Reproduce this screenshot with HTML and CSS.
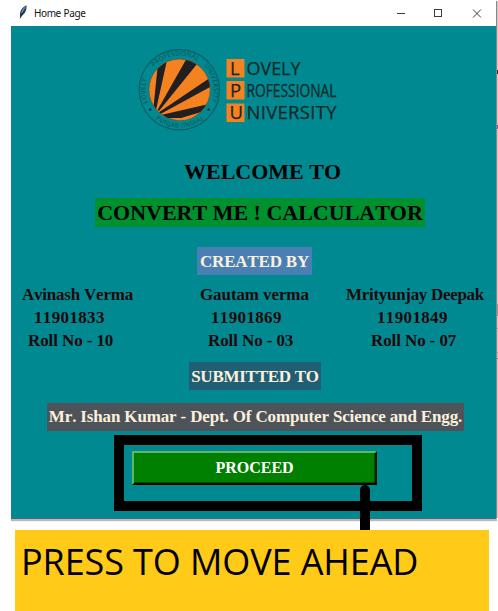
FILE: index.html
```html
<!DOCTYPE html>
<html lang="en">
<head>
<meta charset="utf-8">
<title>Home Page</title>
<link rel="stylesheet" href="styles.css">
</head>
<body>
<div class="desktop">
  <main class="window">
    <header class="titlebar">
      <svg class="feather" width="10" height="14" viewBox="0 0 10 14"><path d="M1.2 13 1 10.5C.8 6 3 2.500 7.300.300c.8 2 .1 5-1.600 7.700L3 10.800z" fill="#243752"/><path d="M2.300 9C2.400 5.400 4.200 2.800 6.700 1.400 6.900 4 5.200 6.800 2.300 9z" fill="#6c9ed4"/><path d="M1 13.400 6 3.500" stroke="#182438" stroke-width=".8"/></svg>
      <span class="title">Home Page</span>
      <svg class="controls" width="86" height="12" viewBox="0 0 86 12" fill="none" stroke="#3c3c3c"><path d="M0 6.500h8"/><rect x="37.500" y="2.500" width="7" height="7"/><path d="m76 2.500 8 8m0-8-8 8"/></svg>
    </header>
    <section class="content">
      <svg class="logo" width="210" height="90" viewBox="134 45 210 90">
        <defs>
          <clipPath id="disc"><circle cx="179.600" cy="89.700" r="30.500"/></clipPath>
          <path id="arcTop" d="M148.200 103.500A34.200 34.200 0 1 1 210.800 103.500"/>
          <path id="arcBottom" d="M146 107.500A38 38 0 0 0 213 107.500"/>
        </defs>
        <circle cx="179.300" cy="89.700" r="40.100" fill="none" stroke="#125d64" stroke-width="1.200"/>
        <circle cx="179.600" cy="89.700" r="30.700" fill="#f58220" stroke="#5c5548" stroke-width=".8"/>
        <g clip-path="url(#disc)" fill="#231f20">
          <path d="M153.500 107 158.500 58H167.500L156 110zM157.500 110 187.500 57 197 64 159 111zM158.500 112.500 209 78.500 212 86 160.500 114zM161 115 211 103.500V113L185 118 162 118z"/>
          <path d="M171 121 208 110v4l-28 8z" fill="#f58220"/>
        </g>
        <g class="seal-text">
          <text><textPath href="#arcTop" startOffset="1" textLength="24">LOVELY</textPath></text>
          <text><textPath href="#arcTop" startOffset="39" textLength="48">PROFESSIONAL</textPath></text>
          <text><textPath href="#arcTop" startOffset="95" textLength="38">UNIVERSITY</textPath></text>
          <text><textPath href="#arcBottom" startOffset="15" textLength="51">PUNJAB (INDIA)</textPath></text>
        </g>
        <circle cx="150.200" cy="109.500" r="1.300" fill="#122c30"/><circle cx="208.700" cy="109.500" r="1.300" fill="#122c30"/>
        <path d="M226.500 59h18v18.500h-18zM226.500 81h18v18.500h-18zM226.500 103.500h18v18.500h-18z" fill="#f58220"/>
        <g class="logo-text">
          <text x="230" y="75.200">L</text><text x="230" y="97.200">P</text><text x="229.500" y="119.200">U</text>
          <text x="246.500" y="75.200" textLength="54" lengthAdjust="spacingAndGlyphs">OVELY</text>
          <text x="246.500" y="97.200" textLength="90" lengthAdjust="spacingAndGlyphs">ROFESSIONAL</text>
          <text x="246.500" y="119.200" textLength="90">NIVERSITY</text>
        </g>
      </svg>
      <h1 class="welcome">WELCOME TO</h1>
      <h2 class="label product">CONVERT ME ! CALCULATOR</h2>
      <h3 class="label created">CREATED BY</h3>
      <div class="people">
        <div class="person first"><p class="name">Avinash Verma</p><p class="num">11901833</p><p class="roll">Roll No - 10</p></div>
        <div class="person second"><p class="name">Gautam verma</p><p class="num">11901869</p><p class="roll">Roll No - 03</p></div>
        <div class="person third"><p class="name">Mrityunjay Deepak</p><p class="num">11901849</p><p class="roll">Roll No - 07</p></div>
      </div>
      <h3 class="label submitted">SUBMITTED TO</h3>
      <p class="label teacher">Mr. Ishan Kumar - Dept. Of Computer Science and Engg.</p>
      <div class="highlight"><button class="proceed">PROCEED</button></div>
    </section>
  </main>
  <aside class="edge"><i class="mark dot"></i><i class="mark purple"></i><i class="mark gray"></i><i class="mark rule-a"></i><i class="mark rule-b"></i><i class="mark rule-c"></i></aside>
  <div class="pointer"></div>
  <div class="callout">PRESS TO MOVE AHEAD</div>
</div>
</body>
</html>
```

FILE: styles.css
```css
* { box-sizing: border-box; }
body, h1, h2, h3, p { margin: 0; }
body { width: 498px; height: 611px; overflow: hidden; background: #fff; }
.desktop { position: relative; width: 498px; height: 611px; }
.window { width: 485px; margin-left: 11px; }
.titlebar { height: 26px; display: flex; align-items: center; padding-left: 8px; }
.feather { margin-top: -2px; }
.title { margin-left: 5px; font: 10px "Noto Sans", sans-serif; letter-spacing: -.5px; color: #111; word-spacing: .5px; }
.title { letter-spacing: -.4px; }
.controls { margin-left: auto; margin-right: 13px; }
.content {
  height: 493px; background: #008990; display: flex; flex-direction: column; align-items: flex-start;
  border-bottom: 1px solid #456d74; box-shadow: 0 1px 1px 1px #b9b9b9;
  clip-path: inset(0 -1px -3px 0);
  padding-top: 19px; font-family: "Liberation Serif", serif; font-weight: bold; font-kerning: none;
  white-space: nowrap;
}
.logo { flex: none; margin-left: 123px; }
.seal-text { font: 6.3px "Open Sans", sans-serif; fill: #0d4950; }
.logo-text { font: 18.5px "Open Sans", sans-serif; fill: #17272a; stroke: #17272a; stroke-width: .25px; }
.welcome { margin: 24px 0 0 173px; font-size: 22px; line-height: 26px; }
.label { display: flex; align-items: center; justify-content: center; height: 28px; color: #faf0dc; font-size: 17px; }
.product { margin: 13px 0 0 84px; width: 330px; height: 29px; background: #00912f; color: #000; font-size: 22px; }
.created { margin: 20px 0 0 186px; width: 115px; background: #4a7fb3; letter-spacing: -.2px; padding-top: 1px; }
.people { display: flex; width: 485px; height: 69px; margin-top: 8px; color: #21090d; font-size: 17px; line-height: 23px; }
.name { letter-spacing: -.22px; }
.first { width: 178px; padding-left: 11px; }
.second { width: 146px; padding-left: 11px; }
.second .name { letter-spacing: -.1px; }
.third { padding-left: 11px; }
.third .name { letter-spacing: -.3px; }
.num { padding-left: 12px; letter-spacing: .35px; }
.second .num { padding-left: 11px; }
.third .num { padding-left: 31px; }
.roll { padding-left: 6px; letter-spacing: -.1px; }
.second .roll { padding-left: 8px; }
.third .roll { padding-left: 25px; }
.submitted { margin: 10px 0 0 178px; width: 132px; background: #205f73; letter-spacing: -.27px; padding-top: 1px; }
.teacher { margin: 13px 0 0 36px; width: 417px; background: #4e535a; letter-spacing: -.15px; }
.highlight { width: 308px; height: 76px; margin: 4px 0 0 103px; border: 10px solid #000; padding: 6px 0 0 8px; }
.proceed {
  display: block; width: 245px; height: 34px; padding: 0; border: 2px solid; border-color: #63b563 #001800 #000 #63b563;
  box-shadow: inset -1px -1px #004c00; background: #008000; color: #fff; font: bold 16px "Liberation Serif", serif;
}
.edge { position: absolute; left: 496px; top: 1px; width: 2px; height: 517px; background: #c9c9c9; border-left: 1px solid #888; }
.mark { position: absolute; left: 0; width: 1px; }
.dot { top: 69px; height: 4px; background: #302832; }
.purple { top: 124px; height: 4px; background: #8852a8; }
.gray { top: 303px; height: 12px; background: #999; }
.rule-a { top: 327px; height: 1px; background: #999; }
.rule-b { top: 351px; height: 1px; background: #999; }
.rule-c { top: 357px; height: 1px; background: #777; }
.pointer { position: absolute; left: 360px; top: 485px; width: 10px; height: 46px; background: #000; border-radius: 5px 5px 0 0; }
.callout {
  position: relative; width: 474px; height: 81px; margin: 11px 0 0 15px; padding: 7px 0 0 6px; background: #ffca18;
  color: #000; font: 36px/50px "Open Sans", sans-serif; letter-spacing: -.1px; white-space: nowrap;
}
```
